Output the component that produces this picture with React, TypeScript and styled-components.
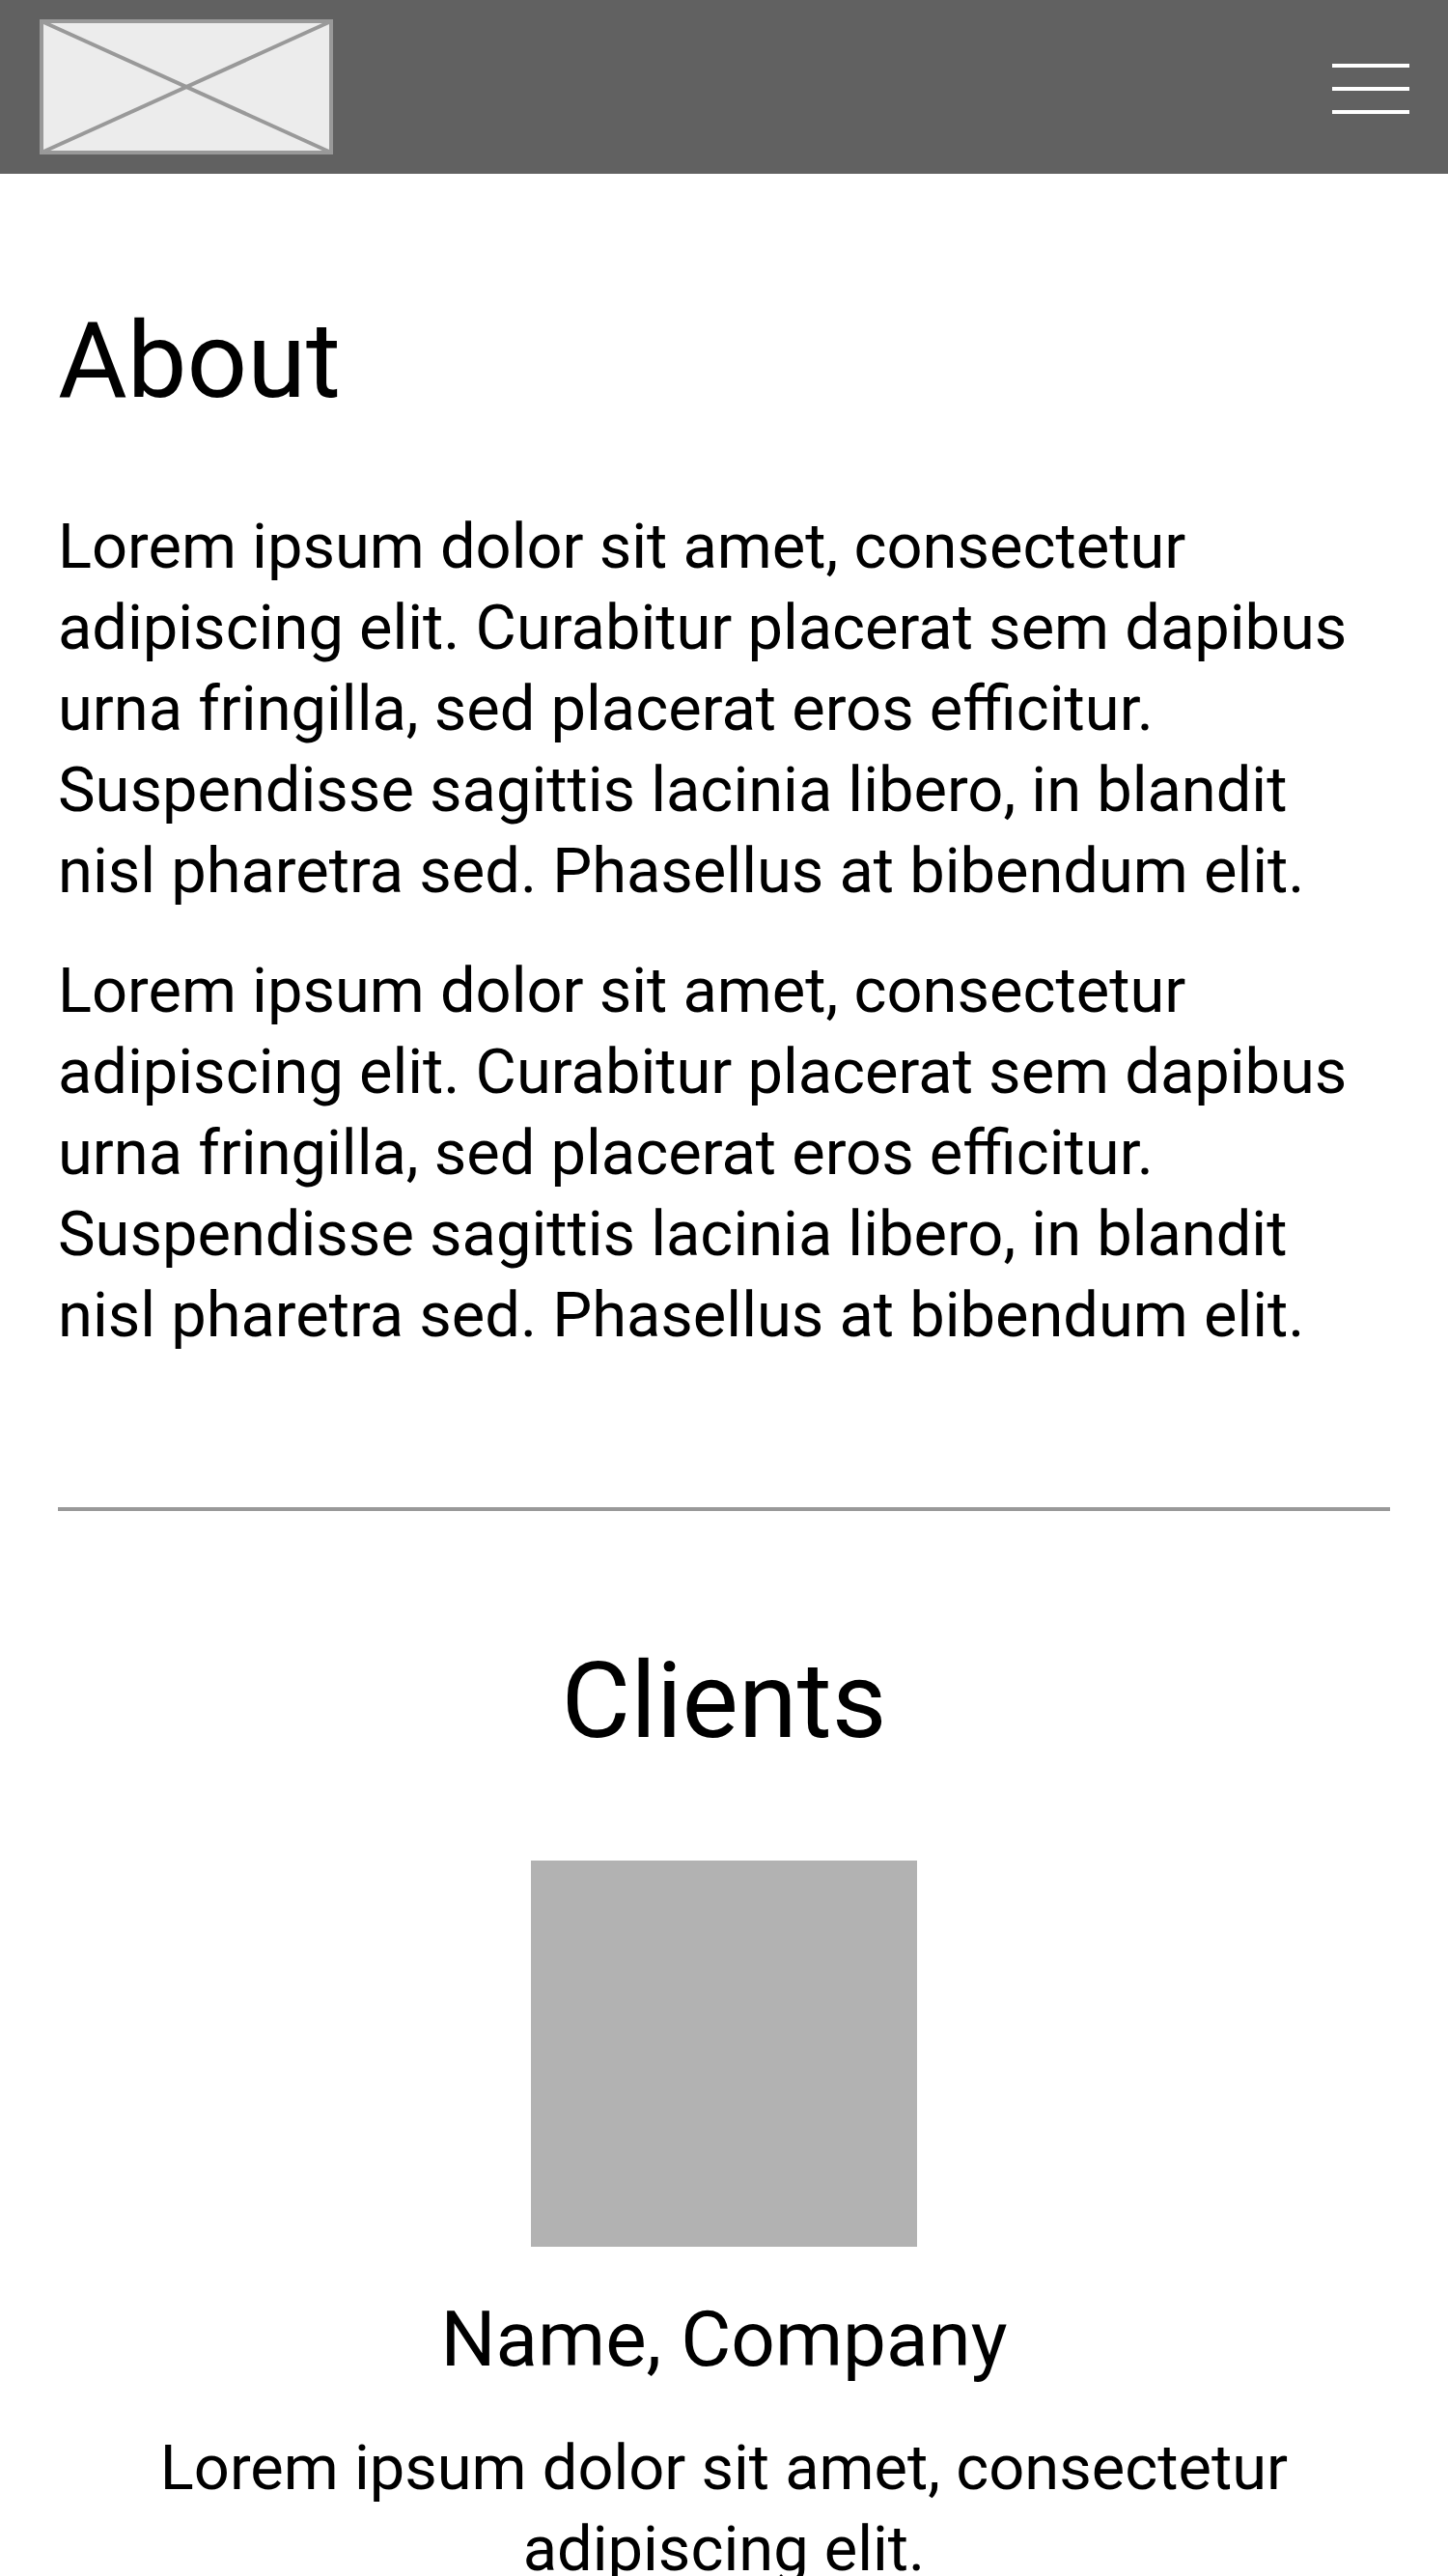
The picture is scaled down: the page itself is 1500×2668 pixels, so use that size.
import React from "react";
import styled, { createGlobalStyle } from "styled-components";

const Global = createGlobalStyle`
  html, body { margin: 0; padding: 0; background: #fff; }
  body { font-family: Roboto, "Liberation Sans", sans-serif; color: #000; }
  * { box-sizing: border-box; }
`;

const Header = styled.header`
  height: 180px;
  background: #616161;
  display: flex;
  align-items: center;
  justify-content: space-between;
  padding: 0 40px 0 41px;
`;

const Logo = styled.svg`
  display: block;
  width: 304px;
  height: 140px;
`;

const Burger = styled.button`
  display: flex;
  flex-direction: column;
  gap: 20px;
  width: 80px;
  padding: 0;
  border: 0;
  background: transparent;
  margin-top: 4px;
`;

const Bar = styled.span`
  display: block;
  height: 4px;
  width: 80px;
  background: #fff;
`;

const Main = styled.main`
  padding: 130px 60px 0;
`;

const H1 = styled.h1<{ $center?: boolean }>`
  margin: 0;
  font-size: 110px;
  line-height: 128px;
  font-weight: 400;
  text-align: ${(p) => (p.$center ? "center" : "left")};
`;

const AboutSection = styled.section`
  display: flex;
  flex-direction: column;
`;

const Paragraphs = styled.div`
  margin-top: 86px;
  display: flex;
  flex-direction: column;
  gap: 40px;
`;

const Para = styled.p`
  margin: 0;
  font-size: 65px;
  line-height: 84px;
`;

const Divider = styled.hr`
  margin: 157px 0 0;
  border: 0;
  height: 4px;
  background: #999;
`;

const ClientsSection = styled.section`
  padding-top: 133px;
  display: flex;
  flex-direction: column;
  align-items: center;
`;

const Photo = styled.div`
  margin-top: 101px;
  width: 400px;
  height: 400px;
  background: #b2b2b2;
`;

const Name = styled.h2`
  margin: 49px 0 0;
  font-size: 80px;
  line-height: 94px;
  font-weight: 400;
  text-align: center;
`;

const Quote = styled.p`
  margin: 44px 0 0;
  font-size: 65px;
  line-height: 84px;
  text-align: center;
`;

const lorem =
  "Lorem ipsum dolor sit amet, consectetur adipiscing elit. Curabitur placerat sem dapibus urna fringilla, sed placerat eros efficitur. Suspendisse sagittis lacinia libero, in blandit nisl pharetra sed. Phasellus at bibendum elit.";

export default function App() {
  return (
    <>
      <Global />
      <Header>
        <Logo viewBox="0 0 304 140" aria-label="logo">
          <rect x="2" y="2" width="300" height="136" fill="#ececec" stroke="#999" strokeWidth="4" />
          <line x1="2" y1="2" x2="302" y2="138" stroke="#999" strokeWidth="4" />
          <line x1="302" y1="2" x2="2" y2="138" stroke="#999" strokeWidth="4" />
        </Logo>
        <Burger aria-label="menu">
          <Bar />
          <Bar />
          <Bar />
        </Burger>
      </Header>
      <Main>
        <AboutSection>
          <H1>About</H1>
          <Paragraphs>
            <Para>{lorem}</Para>
            <Para>{lorem}</Para>
          </Paragraphs>
        </AboutSection>
        <Divider />
        <ClientsSection>
          <H1 $center>Clients</H1>
          <Photo />
          <Name>Name, Company</Name>
          <Quote>Lorem ipsum dolor sit amet, consectetur adipiscing elit.</Quote>
        </ClientsSection>
      </Main>
    </>
  );
}
